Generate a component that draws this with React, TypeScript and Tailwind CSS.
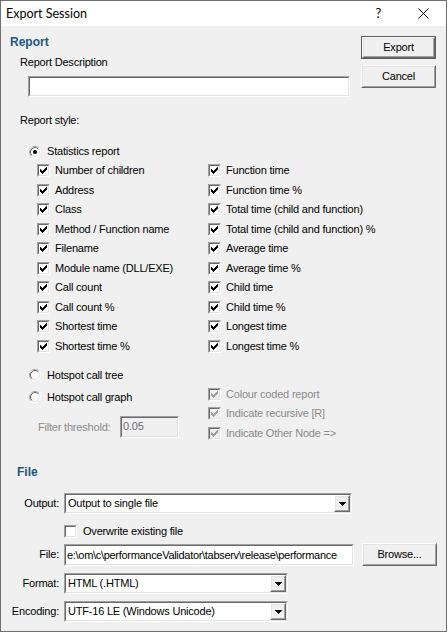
import React from 'react';
import { clsx } from 'clsx';

const SUNKEN_OUT = 'border border-t-[#a0a0a0] border-l-[#a0a0a0] border-b-white border-r-white';
const SUNKEN_IN = 'border border-t-[#696969] border-l-[#696969] border-b-[#e3e3e3] border-r-[#e3e3e3]';
const RAISED_OUT = 'border border-t-white border-l-white border-b-[#696969] border-r-[#696969]';
const RAISED_IN = 'border border-t-[#e3e3e3] border-l-[#e3e3e3] border-b-[#a0a0a0] border-r-[#a0a0a0]';

const LEFT_ITEMS = [
  'Number of children',
  'Address',
  'Class',
  'Method / Function name',
  'Filename',
  'Module name (DLL/EXE)',
  'Call count',
  'Call count %',
  'Shortest time',
  'Shortest time %',
];

const RIGHT_ITEMS = [
  'Function time',
  'Function time %',
  'Total time (child and function)',
  'Total time (child and function) %',
  'Average time',
  'Average time %',
  'Child time',
  'Child time %',
  'Longest time',
  'Longest time %',
];

// classic 7x7 tick, one 3px column per x
const TICK = [
  [0, 2],
  [1, 3],
  [2, 4],
  [3, 3],
  [4, 2],
  [5, 1],
  [6, 0],
];

function Sunken({
  className,
  inner,
  children,
}: {
  className?: string;
  inner?: string;
  children?: React.ReactNode;
}) {
  return (
    <div className={clsx(SUNKEN_OUT, className)}>
      <div className={clsx(SUNKEN_IN, 'size-full overflow-hidden', inner ?? 'bg-white')}>{children}</div>
    </div>
  );
}

function Checkbox({ checked = true, disabled = false }: { checked?: boolean; disabled?: boolean }) {
  return (
    <div className={clsx(SUNKEN_OUT, 'size-[13px] shrink-0')}>
      <div
        className={clsx(
          SUNKEN_IN,
          'flex size-full items-center justify-center',
          disabled ? 'bg-[#f0f0f0]' : 'bg-white',
        )}
      >
        {checked && (
          <svg width="7" height="7" shapeRendering="crispEdges">
            {TICK.map(([x, y]) => (
              <rect key={x} x={x} y={y} width="1" height="3" fill={disabled ? '#a0a0a0' : '#000'} />
            ))}
          </svg>
        )}
      </div>
    </div>
  );
}

function Radio({ checked = false }: { checked?: boolean }) {
  return (
    <svg width="12" height="12" className="shrink-0">
      <circle cx="6" cy="6" r="5.5" fill="none" stroke="#ffffff" />
      <path d="M2.11 9.89 A5.5 5.5 0 0 1 9.89 2.11" fill="none" stroke="#a0a0a0" />
      <circle cx="6" cy="6" r="4.5" fill="#ffffff" stroke="#e3e3e3" />
      <path d="M2.82 9.18 A4.5 4.5 0 0 1 9.18 2.82" fill="none" stroke="#696969" />
      {checked && <circle cx="6" cy="6" r="2" fill="#000" />}
    </svg>
  );
}

function CheckRow({ label, disabled = false }: { label: string; disabled?: boolean }) {
  return (
    <div className="flex h-[19.5px] items-center gap-[5px]">
      <Checkbox disabled={disabled} />
      <span className={clsx('whitespace-nowrap', disabled && 'text-[#8a8a8a]')}>{label}</span>
    </div>
  );
}

function Combo({ value, className }: { value: string; className?: string }) {
  return (
    <Sunken className={clsx('h-[21px]', className)}>
      <div className="flex h-full items-center">
        <span className="flex-1 truncate pl-[2px]">{value}</span>
        <div className={clsx(RAISED_OUT, 'h-full w-[16px] shrink-0')}>
          <div className={clsx(RAISED_IN, 'flex size-full items-center justify-center bg-[#f0f0f0]')}>
            <svg width="7" height="4" shapeRendering="crispEdges">
              <rect x="0" y="0" width="7" height="1" fill="#000" />
              <rect x="1" y="1" width="5" height="1" fill="#000" />
              <rect x="2" y="2" width="3" height="1" fill="#000" />
              <rect x="3" y="3" width="1" height="1" fill="#000" />
            </svg>
          </div>
        </div>
      </div>
    </Sunken>
  );
}

function Button({ label, isDefault = false }: { label: string; isDefault?: boolean }) {
  const face = (
    <div className={clsx(RAISED_OUT, 'size-full')}>
      <div className={clsx(RAISED_IN, 'flex size-full items-center justify-center bg-[#f0f0f0]')}>{label}</div>
    </div>
  );
  return (
    <div className={clsx('h-[23px] w-[75px] shrink-0', isDefault && 'border border-[#5a5a5a]')}>{face}</div>
  );
}

function FormLabel({ children }: { children: React.ReactNode }) {
  return <span className="w-[57px] shrink-0 text-right">{children}</span>;
}

export default function App() {
  return (
    <div className="h-[632px] w-[447px] border border-[#707070] bg-[#f0f0f0] font-['Liberation_Sans',Arial,sans-serif] text-[11px] leading-[13px] tracking-[-0.2px] text-black">
      {/* title bar */}
      <div className="flex h-[25px] items-center bg-white tracking-normal">
        <span className="pl-[5px] font-['Lato',sans-serif] text-[12.5px] leading-[16px]">Export Session</span>
        <span className="ml-auto flex w-[45px] justify-center font-['Lato',sans-serif] text-[13px]">?</span>
        <span className="flex w-[45px] justify-center">
          <svg width="11" height="11">
            <path d="M0.5 0.5 L10.5 10.5 M10.5 0.5 L0.5 10.5" stroke="#000" strokeWidth="1" />
          </svg>
        </span>
      </div>

      {/* report header + buttons */}
      <div className="flex justify-between pr-[10px]">
        <div className="flex flex-col">
          <h2 className="mt-[9px] pl-[9px] text-[12px] leading-[14px] font-bold tracking-normal text-[#1b5685]">
            Report
          </h2>
          <span className="mt-[7px] pl-[19px]">Report Description</span>
          <Sunken className="mt-[7px] ml-[27px] h-[21px] w-[322px]" />
        </div>
        <div className="mt-[10px] flex flex-col gap-[6px]">
          <Button label="Export" isDefault />
          <Button label="Cancel" />
        </div>
      </div>

      <div className="mt-[17px] pl-[19px]">Report style:</div>

      <div className="mt-[18px] flex items-center gap-[6px] pl-[28px]">
        <Radio checked />
        <span>Statistics report</span>
      </div>

      <div className="mt-[3px] grid grid-cols-[171px_1fr] pl-[36px]">
        <div className="flex flex-col">
          {LEFT_ITEMS.map((l) => (
            <CheckRow key={l} label={l} />
          ))}
        </div>
        <div className="flex flex-col">
          {RIGHT_ITEMS.map((l) => (
            <CheckRow key={l} label={l} />
          ))}
        </div>
      </div>

      {/* hotspot options */}
      <div className="mt-[9px] flex items-start">
        <div className="flex w-[207px] flex-col">
          <div className="flex h-[20px] items-center gap-[6px] pl-[28px]">
            <Radio />
            <span>Hotspot call tree</span>
          </div>
          <div className="mt-[2px] flex h-[20px] items-center gap-[6px] pl-[28px]">
            <Radio />
            <span>Hotspot call graph</span>
          </div>
          <div className="mt-[9px] flex items-center pl-[37px]">
            <span className="w-[82px] text-[#8a8a8a]">Filter threshold:</span>
            <Sunken className="h-[22px] w-[59px]" inner="bg-[#f0f0f0]">
              <div className="pt-[2px] pl-[1px] text-[#6d6d6d]">0.05</div>
            </Sunken>
          </div>
        </div>
        <div className="mt-[19.5px] flex flex-col">
          <CheckRow label="Colour coded report" disabled />
          <CheckRow label="Indicate recursive [R]" disabled />
          <CheckRow label="Indicate Other Node =>" disabled />
        </div>
      </div>

      {/* file section */}
      <h2 className="mt-[22px] pl-[16px] text-[12px] leading-[14px] font-bold tracking-normal text-[#1b5685]">File</h2>

      <div className="mt-[14px] flex items-center gap-[5px] pl-[1px]">
        <FormLabel>Output:</FormLabel>
        <Combo value="Output to single file" className="w-[288px]" />
      </div>

      <div className="mt-[11px] flex h-[13px] items-center gap-[6px] pl-[63px]">
        <Checkbox checked={false} />
        <span>Overwrite existing file</span>
      </div>

      <div className="mt-[5px] flex items-center gap-[5px] pl-[1px]">
        <FormLabel>File:</FormLabel>
        <Sunken className="h-[22px] w-[290px]">
          <div className="pt-[3px] pl-[1px] tracking-[-0.3px] whitespace-nowrap">
            e:\om\c\performanceValidator\tabserv\release\performance
          </div>
        </Sunken>
        <div className="ml-[3px]">
          <Button label="Browse..." />
        </div>
      </div>

      <div className="mt-[7px] flex items-center gap-[5px] pl-[1px]">
        <FormLabel>Format:</FormLabel>
        <Combo value="HTML (.HTML)" className="w-[224px]" />
      </div>

      <div className="mt-[7px] flex items-center gap-[5px] pl-[1px]">
        <FormLabel>Encoding:</FormLabel>
        <Combo value="UTF-16 LE (Windows Unicode)" className="w-[224px]" />
      </div>
    </div>
  );
}
